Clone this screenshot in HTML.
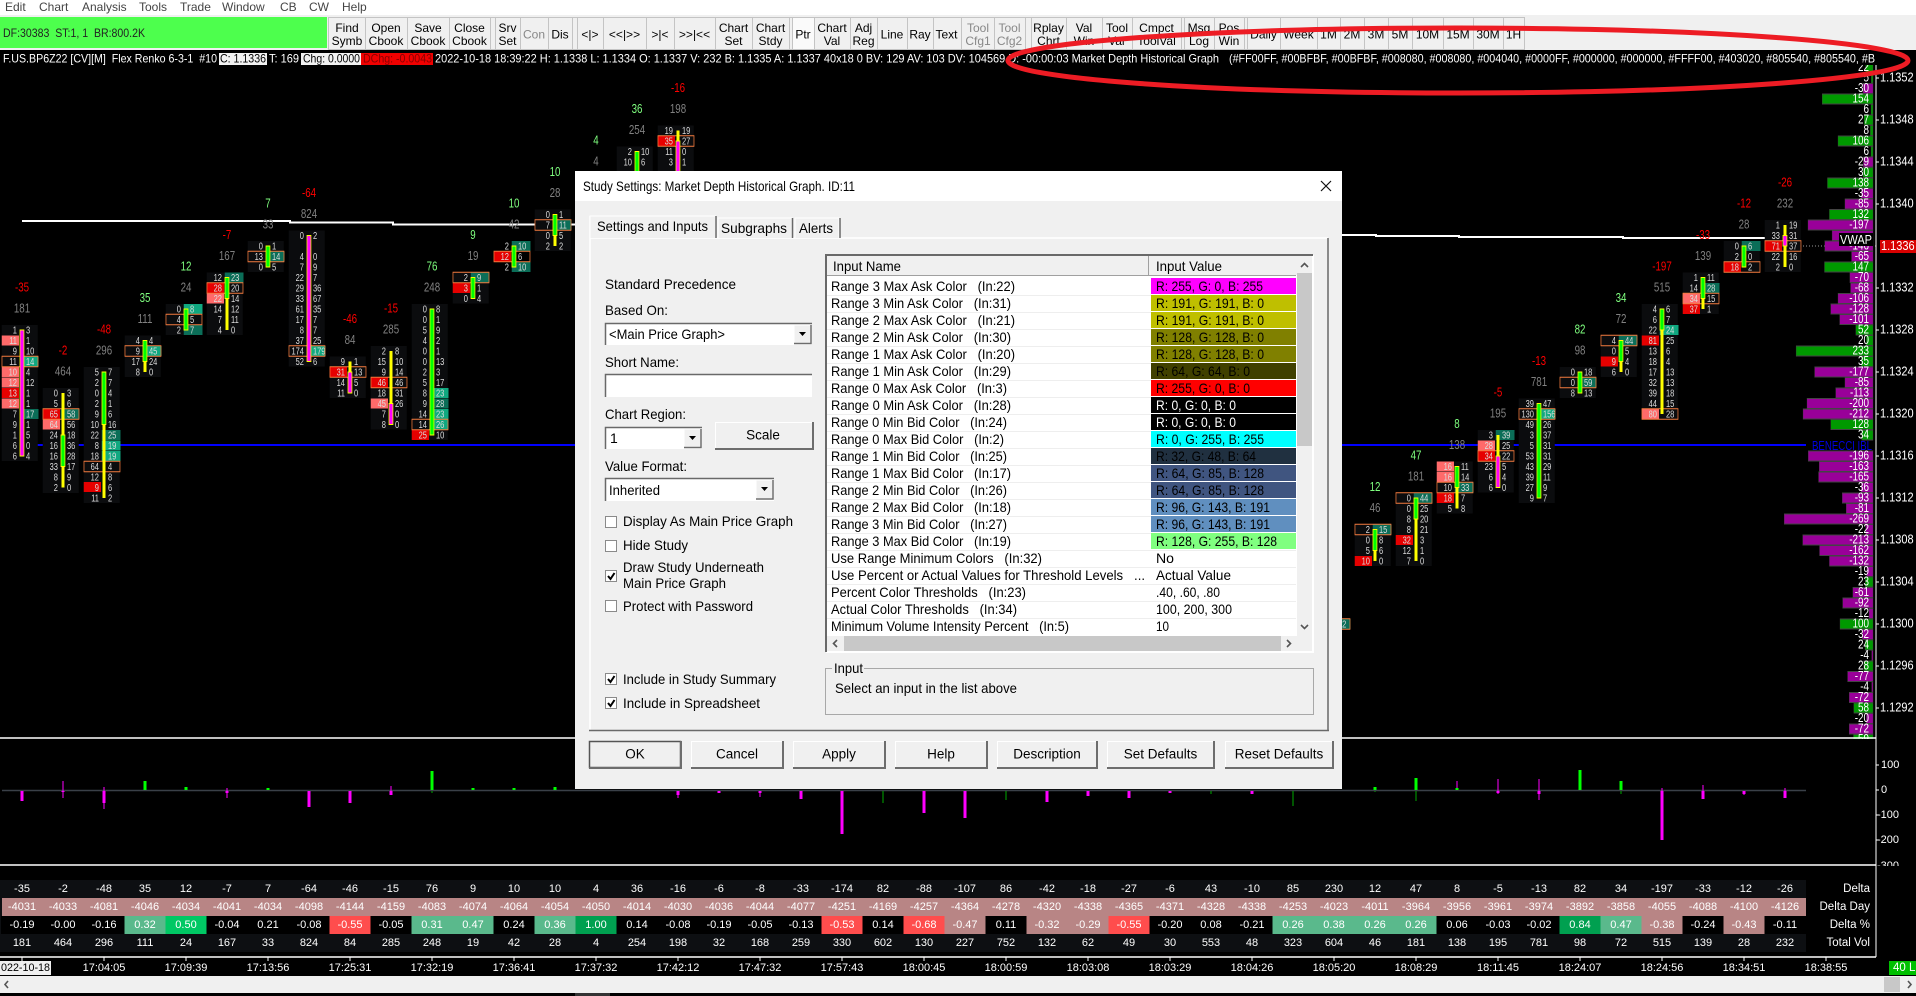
<!DOCTYPE html>
<html><head><meta charset="utf-8"><title>Study Settings</title>
<style>
html,body{margin:0;background:#000;overflow:hidden}
svg{display:block}
text{font-family:"Liberation Sans",sans-serif;dominant-baseline:central;font-size:12px}
.f text{font-size:10px;fill:#ddd}
.l{text-anchor:end;transform:translateX(-6.7px)}
.r{transform:translateX(5.3px)}
.bg{x:-27px;width:48px;fill:#0b0c0e}
.L{x:-27px;width:23px;height:10px}
.H{x:-3px;width:25px;height:10px}
.p{fill:#ff6a6a}.e{fill:#e60000}.t{fill:#10a880}.d{fill:#0b6e58}
.x{x:-26.7px;width:48px;height:10.5px;fill:none;stroke:#f47b3e}
.W{x:-2px;width:4px;fill:#ff0}
.G{x:-2.7px;width:5.3px;fill:#0f0;stroke:#ff0}
.M{x:-2.7px;width:5.3px;fill:#f0f;stroke:#ff0}
.f text.u{font-size:13px;text-anchor:middle;fill:#7fff7f}
.f text.n{font-size:13px;text-anchor:middle;fill:#f00}
.f text.v{font-size:13px;text-anchor:middle;fill:#808080}
.vp rect{height:10px;stroke:#444}
.vg{fill:#090}.vm{fill:#909}
.vt text{font-size:13px;fill:#fff;text-anchor:end}
.px text{font-size:12.5px;fill:#fff}
.tb text{font-size:11px;fill:#fff;text-anchor:middle}
.tk text{font-size:12px;text-anchor:middle;fill:#000}
.tk text.o{fill:#888}
.dg text{font-size:14px;fill:#000}
.c{text-anchor:middle}
.face{fill:#f0f0f0;stroke:#fff}
.sh{fill:none;stroke:#6d6d6d;stroke-width:2}
.cb{fill:#fff;stroke:#8a8a8a}
.ck{fill:none;stroke:#000;stroke-width:2}
.cv{fill:none;stroke:#555;stroke-width:1.6}
</style></head><body>
<svg width="1916" height="996" viewBox="0 0 1916 996" xmlns="http://www.w3.org/2000/svg">
<rect width="1916" height="996" fill="#000"/>

<!-- VWAP + level lines -->
<path d="M22 221H290V222.5H393V224.5H575" stroke="#fff" stroke-width="2" fill="none"/>
<path d="M1340 235H1376V236H1459V237H1623V238H1785" stroke="#fff" stroke-width="2" fill="none"/>
<path d="M2 445H1806" stroke="#00f" stroke-width="2"/>
<path d="M1785 246H1878" stroke="#999" stroke-dasharray="1 2"/>

<!-- footprint columns -->
<g class="f" transform="translate(22 0) scale(.75 1)"><rect class="bg" y="325" height="136"/><rect class="L p" y="335.5"/><rect class="L p" y="367"/><rect class="L p" y="377.5"/><rect class="L e" y="388"/><rect class="L p" y="398.5"/><rect class="H t" y="356.5"/><rect class="H d" y="409"/>
<g class="l"><text y="330">1</text><text y="340.5">11</text><text y="351">9</text><text y="361.5">11</text><text y="372">10</text><text y="382.5">12</text><text y="393">13</text><text y="403.5">12</text><text y="414">7</text><text y="424.5">9</text><text y="435">1</text><text y="445.5">6</text><text y="456">6</text></g>
<g class="r"><text y="330">3</text><text y="340.5">1</text><text y="351">10</text><text y="361.5">14</text><text y="372">4</text><text y="382.5">12</text><text y="393">1</text><text y="403.5">1</text><text y="414">17</text><text y="424.5">1</text><text y="435">5</text><text y="445.5">0</text><text y="456">4</text></g>
<rect class="x" y="356.25"/><rect class="M" y="330" height="126"/><text class="n" y="288">-35</text><text class="v" y="309">181</text></g>

<g class="f" transform="translate(63 0) scale(.75 1)"><rect class="bg" y="388" height="105"/><rect class="L e" y="409"/><rect class="L p" y="419.5"/><rect class="H d" y="409"/>
<g class="l"><text y="393">0</text><text y="403.5">5</text><text y="414">65</text><text y="424.5">64</text><text y="435">24</text><text y="445.5">16</text><text y="456">16</text><text y="466.5">33</text><text y="477">8</text><text y="487.5">2</text></g>
<g class="r"><text y="393">3</text><text y="403.5">6</text><text y="414">58</text><text y="424.5">56</text><text y="435">18</text><text y="445.5">36</text><text y="456">28</text><text y="466.5">17</text><text y="477">9</text><text y="487.5">0</text></g>
<rect class="x" y="408.75"/><rect class="W" y="393" height="94.5"/><rect class="G" y="435" height="31.5"/><text class="n" y="351">-2</text><text class="v" y="372">464</text></g>

<g class="f" transform="translate(104 0) scale(.75 1)"><rect class="bg" y="367" height="136"/><rect class="L e" y="482"/><rect class="H d" y="430"/><rect class="H t" y="440.5"/><rect class="H t" y="451"/>
<g class="l"><text y="372">5</text><text y="382.5">2</text><text y="393">0</text><text y="403.5">2</text><text y="414">9</text><text y="424.5">10</text><text y="435">22</text><text y="445.5">8</text><text y="456">18</text><text y="466.5">64</text><text y="477">12</text><text y="487.5">9</text><text y="498">11</text></g>
<g class="r"><text y="372">7</text><text y="382.5">7</text><text y="393">4</text><text y="403.5">1</text><text y="414">6</text><text y="424.5">16</text><text y="435">25</text><text y="445.5">19</text><text y="456">19</text><text y="466.5">4</text><text y="477">8</text><text y="487.5">6</text><text y="498">2</text></g>
<rect class="x" y="461.25"/><rect class="W" y="372" height="126"/><rect class="G" y="372" height="52.5"/><text class="n" y="330">-48</text><text class="v" y="351">296</text></g>

<g class="f" transform="translate(145 0) scale(.75 1)"><rect class="bg" y="335.5" height="41.5"/><rect class="H t" y="346"/>
<g class="l"><text y="340.5">4</text><text y="351">9</text><text y="361.5">17</text><text y="372">8</text></g>
<g class="r"><text y="340.5">4</text><text y="351">45</text><text y="361.5">24</text><text y="372">0</text></g>
<rect class="x" y="345.75"/><rect class="W" y="340.5" height="31.5"/><rect class="G" y="340.5" height="21"/><text class="u" y="298.5">35</text><text class="v" y="319.5">111</text></g>

<g class="f" transform="translate(186 0) scale(.75 1)"><rect class="bg" y="304" height="31"/><rect class="H t" y="304"/><rect class="H d" y="325"/>
<g class="l"><text y="309">0</text><text y="319.5">4</text><text y="330">2</text></g>
<g class="r"><text y="309">8</text><text y="319.5">5</text><text y="330">7</text></g>
<rect class="x" y="314.25"/><rect class="G" y="309" height="21"/><text class="u" y="267">12</text><text class="v" y="288">24</text></g>

<g class="f" transform="translate(227 0) scale(.75 1)"><rect class="bg" y="272.5" height="62.5"/><rect class="L e" y="283"/><rect class="L p" y="293.5"/><rect class="H d" y="272.5"/>
<g class="l"><text y="277.5">12</text><text y="288">28</text><text y="298.5">22</text><text y="309">14</text><text y="319.5">7</text><text y="330">4</text></g>
<g class="r"><text y="277.5">23</text><text y="288">20</text><text y="298.5">14</text><text y="309">12</text><text y="319.5">11</text><text y="330">0</text></g>
<rect class="x" y="282.75"/><rect class="W" y="277.5" height="52.5"/><rect class="G" y="277.5" height="21"/><text class="n" y="235.5">-7</text><text class="v" y="256.5">167</text></g>

<g class="f" transform="translate(268 0) scale(.75 1)"><rect class="bg" y="241" height="31"/><rect class="H d" y="251.5"/>
<g class="l"><text y="246">0</text><text y="256.5">13</text><text y="267">0</text></g>
<g class="r"><text y="246">1</text><text y="256.5">14</text><text y="267">5</text></g>
<rect class="x" y="251.25"/><rect class="G" y="246" height="21"/><text class="u" y="204">7</text><text class="v" y="225">33</text></g>

<g class="f" transform="translate(309 0) scale(.75 1)"><rect class="bg" y="230.5" height="136"/><rect class="H t" y="346"/>
<g class="l"><text y="235.5">0</text><text y="256.5">4</text><text y="267">7</text><text y="277.5">22</text><text y="288">29</text><text y="298.5">33</text><text y="309">61</text><text y="319.5">17</text><text y="330">8</text><text y="340.5">37</text><text y="351">174</text><text y="361.5">52</text></g>
<g class="r"><text y="235.5">2</text><text y="256.5">0</text><text y="267">9</text><text y="277.5">7</text><text y="288">36</text><text y="298.5">67</text><text y="309">35</text><text y="319.5">7</text><text y="330">7</text><text y="340.5">25</text><text y="351">179</text><text y="361.5">6</text></g>
<rect class="x" y="345.75"/><rect class="M" y="235.5" height="126"/><text class="n" y="193.5">-64</text><text class="v" y="214.5">824</text></g>

<g class="f" transform="translate(350 0) scale(.75 1)"><rect class="bg" y="356.5" height="41.5"/><rect class="L e" y="367"/>
<g class="l"><text y="361.5">9</text><text y="372">31</text><text y="382.5">14</text><text y="393">11</text></g>
<g class="r"><text y="361.5">1</text><text y="372">13</text><text y="382.5">5</text><text y="393">0</text></g>
<rect class="x" y="366.75"/><rect class="W" y="361.5" height="31.5"/><rect class="M" y="372" height="21"/><text class="n" y="319.5">-46</text><text class="v" y="340.5">84</text></g>

<g class="f" transform="translate(391 0) scale(.75 1)"><rect class="bg" y="346" height="83.5"/><rect class="L e" y="377.5"/><rect class="L p" y="398.5"/>
<g class="l"><text y="351">2</text><text y="361.5">15</text><text y="372">9</text><text y="382.5">46</text><text y="393">18</text><text y="403.5">45</text><text y="414">7</text><text y="424.5">8</text></g>
<g class="r"><text y="351">8</text><text y="361.5">10</text><text y="372">14</text><text y="382.5">46</text><text y="393">31</text><text y="403.5">26</text><text y="414">0</text><text y="424.5">0</text></g>
<rect class="x" y="377.25"/><rect class="W" y="351" height="73.5"/><rect class="M" y="403.5" height="21"/><text class="n" y="309">-15</text><text class="v" y="330">285</text></g>

<g class="f" transform="translate(432 0) scale(.75 1)"><rect class="bg" y="304" height="136"/><rect class="L e" y="430"/><rect class="H t" y="388"/><rect class="H d" y="398.5"/><rect class="H t" y="409"/><rect class="H t" y="419.5"/>
<g class="l"><text y="309">0</text><text y="319.5">0</text><text y="330">5</text><text y="340.5">4</text><text y="351">0</text><text y="361.5">0</text><text y="372">2</text><text y="382.5">5</text><text y="393">8</text><text y="403.5">9</text><text y="414">14</text><text y="424.5">14</text><text y="435">25</text></g>
<g class="r"><text y="309">8</text><text y="319.5">1</text><text y="330">9</text><text y="340.5">2</text><text y="351">1</text><text y="361.5">13</text><text y="372">3</text><text y="382.5">17</text><text y="393">23</text><text y="403.5">28</text><text y="414">23</text><text y="424.5">26</text><text y="435">10</text></g>
<rect class="x" y="419.25"/><rect class="G" y="309" height="126"/><text class="u" y="267">76</text><text class="v" y="288">248</text></g>

<g class="f" transform="translate(473 0) scale(.75 1)"><rect class="bg" y="272.5" height="31"/><rect class="L e" y="283"/><rect class="H d" y="272.5"/>
<g class="l"><text y="277.5">2</text><text y="288">3</text><text y="298.5">0</text></g>
<g class="r"><text y="277.5">9</text><text y="288">1</text><text y="298.5">4</text></g>
<rect class="x" y="272.25"/><rect class="G" y="277.5" height="21"/><text class="u" y="235.5">9</text><text class="v" y="256.5">19</text></g>

<g class="f" transform="translate(514 0) scale(.75 1)"><rect class="L e" y="251.5"/><rect class="H d" y="241"/><rect class="H d" y="262"/>
<g class="l"><text y="246">2</text><text y="256.5">12</text><text y="267">2</text></g>
<g class="r"><text y="246">10</text><text y="256.5">6</text><text y="267">10</text></g>
<rect class="x" y="251.25"/><rect class="G" y="246" height="21"/><text class="u" y="204">10</text><text class="v" y="225">42</text></g>

<g class="f" transform="translate(555 0) scale(.75 1)"><rect class="bg" y="209.5" height="41.5"/><rect class="H d" y="220"/>
<g class="l"><text y="214.5">0</text><text y="225">7</text><text y="235.5">0</text><text y="246">2</text></g>
<g class="r"><text y="214.5">1</text><text y="225">11</text><text y="235.5">5</text><text y="246">2</text></g>
<rect class="x" y="219.75"/><rect class="W" y="214.5" height="31.5"/><rect class="G" y="214.5" height="21"/><text class="u" y="172.5">10</text><text class="v" y="193.5">28</text></g>

<g class="f" transform="translate(596 0) scale(.75 1)"><text class="u" y="141">4</text><text class="v" y="162">4</text></g>

<g class="f" transform="translate(637 0) scale(.75 1)"><rect class="bg" y="146.5" height="26"/>
<g class="l"><text y="151.5">2</text><text y="162">10</text></g><g class="r"><text y="151.5">10</text><text y="162">6</text></g>
<rect class="G" y="151.5" height="21"/><text class="u" y="109.5">36</text><text class="v" y="130.5">254</text></g>

<g class="f" transform="translate(678 0) scale(.75 1)"><rect class="bg" y="125.5" height="47"/><rect class="L e" y="136"/>
<g class="l"><text y="130.5">19</text><text y="141">35</text><text y="151.5">11</text><text y="162">3</text></g><g class="r"><text y="130.5">19</text><text y="141">27</text><text y="151.5">0</text><text y="162">1</text></g>
<rect class="x" y="135.75"/><rect class="W" y="130.5" height="15"/><rect class="M" y="141" height="31"/><text class="n" y="88.5">-16</text><text class="v" y="109.5">198</text></g>

<g class="f" transform="translate(1334 0) scale(.75 1)"><rect class="H d" y="619"/>
<g class="r"><text y="571.5">4</text><text y="582">1</text><text y="592.5">6</text><text y="603">0</text><text y="613.5">9</text><text y="624">52</text><text y="634.5">3</text><text y="645">7</text></g>
<rect class="x" y="618.75"/></g>

<g class="f" transform="translate(1375 0) scale(.75 1)"><rect class="bg" y="524.5" height="41.5"/><rect class="L e" y="556"/><rect class="H d" y="524.5"/>
<g class="l"><text y="529.5">2</text><text y="540">0</text><text y="550.5">5</text><text y="561">10</text></g>
<g class="r"><text y="529.5">15</text><text y="540">8</text><text y="550.5">6</text><text y="561">0</text></g>
<rect class="x" y="524.25"/><rect class="W" y="529.5" height="31.5"/><rect class="G" y="529.5" height="21"/><text class="u" y="487.5">12</text><text class="v" y="508.5">46</text></g>

<g class="f" transform="translate(1416 0) scale(.75 1)"><rect class="bg" y="493" height="73"/><rect class="L e" y="535"/><rect class="H d" y="493"/>
<g class="l"><text y="498">0</text><text y="508.5">0</text><text y="519">8</text><text y="529.5">8</text><text y="540">32</text><text y="550.5">12</text><text y="561">7</text></g>
<g class="r"><text y="498">44</text><text y="508.5">25</text><text y="519">20</text><text y="529.5">21</text><text y="540">3</text><text y="550.5">1</text><text y="561">0</text></g>
<rect class="x" y="492.75"/><rect class="W" y="498" height="63"/><rect class="G" y="498" height="21"/><text class="u" y="456">47</text><text class="v" y="477">181</text></g>

<g class="f" transform="translate(1457 0) scale(.75 1)"><rect class="bg" y="461.5" height="52"/><rect class="L p" y="461.5"/><rect class="L p" y="472"/><rect class="L e" y="493"/><rect class="H d" y="482.5"/>
<g class="l"><text y="466.5">16</text><text y="477">16</text><text y="487.5">10</text><text y="498">18</text><text y="508.5">5</text></g>
<g class="r"><text y="466.5">11</text><text y="477">14</text><text y="487.5">33</text><text y="498">7</text><text y="508.5">8</text></g>
<rect class="x" y="482.25"/><rect class="W" y="466.5" height="42"/><rect class="G" y="466.5" height="21"/><text class="u" y="424.5">8</text><text class="v" y="445.5">138</text></g>

<g class="f" transform="translate(1498 0) scale(.75 1)"><rect class="bg" y="430" height="62.5"/><rect class="L p" y="440.5"/><rect class="L e" y="451"/><rect class="H d" y="430"/>
<g class="l"><text y="435">3</text><text y="445.5">28</text><text y="456">34</text><text y="466.5">23</text><text y="477">6</text><text y="487.5">6</text></g>
<g class="r"><text y="435">39</text><text y="445.5">25</text><text y="456">22</text><text y="466.5">5</text><text y="477">4</text><text y="487.5">0</text></g>
<rect class="x" y="450.75"/><rect class="W" y="435" height="21"/><rect class="M" y="456" height="31.5"/><text class="n" y="393">-5</text><text class="v" y="414">195</text></g>

<g class="f" transform="translate(1539 0) scale(.75 1)"><rect class="bg" y="398.5" height="104.5"/><rect class="H t" y="409"/>
<g class="l"><text y="403.5">39</text><text y="414">130</text><text y="424.5">49</text><text y="435">3</text><text y="445.5">5</text><text y="456">53</text><text y="466.5">43</text><text y="477">39</text><text y="487.5">27</text><text y="498">9</text></g>
<g class="r"><text y="403.5">47</text><text y="414">156</text><text y="424.5">26</text><text y="435">37</text><text y="445.5">31</text><text y="456">31</text><text y="466.5">29</text><text y="477">11</text><text y="487.5">9</text><text y="498">7</text></g>
<rect class="x" y="408.75"/><rect class="G" y="403.5" height="94.5"/><text class="n" y="361.5">-13</text><text class="v" y="382.5">781</text></g>

<g class="f" transform="translate(1580 0) scale(.75 1)"><rect class="bg" y="367" height="31"/><rect class="H d" y="377.5"/>
<g class="l"><text y="372">0</text><text y="382.5">0</text><text y="393">8</text></g>
<g class="r"><text y="372">18</text><text y="382.5">59</text><text y="393">13</text></g>
<rect class="x" y="377.25"/><rect class="G" y="372" height="21"/><text class="u" y="330">82</text><text class="v" y="351">98</text></g>

<g class="f" transform="translate(1621 0) scale(.75 1)"><rect class="bg" y="335.5" height="41.5"/><rect class="L e" y="356.5"/><rect class="H d" y="335.5"/>
<g class="l"><text y="340.5">4</text><text y="351">0</text><text y="361.5">9</text><text y="372">6</text></g>
<g class="r"><text y="340.5">44</text><text y="351">5</text><text y="361.5">4</text><text y="372">0</text></g>
<rect class="x" y="335.25"/><rect class="W" y="340.5" height="31.5"/><rect class="G" y="340.5" height="21"/><text class="u" y="298.5">34</text><text class="v" y="319.5">72</text></g>

<g class="f" transform="translate(1662 0) scale(.75 1)"><rect class="bg" y="304" height="115"/><rect class="L e" y="335.5"/><rect class="L p" y="409"/><rect class="H t" y="325"/>
<g class="l"><text y="309">4</text><text y="319.5">6</text><text y="330">22</text><text y="340.5">81</text><text y="351">13</text><text y="361.5">18</text><text y="372">17</text><text y="382.5">32</text><text y="393">39</text><text y="403.5">44</text><text y="414">80</text></g>
<g class="r"><text y="309">6</text><text y="319.5">7</text><text y="330">24</text><text y="340.5">25</text><text y="351">6</text><text y="361.5">4</text><text y="372">13</text><text y="382.5">13</text><text y="393">18</text><text y="403.5">15</text><text y="414">28</text></g>
<rect class="x" y="408.75"/><rect class="W" y="309" height="105"/><rect class="G" y="309" height="21"/><text class="n" y="267">-197</text><text class="v" y="288">515</text></g>

<g class="f" transform="translate(1703 0) scale(.75 1)"><rect class="bg" y="272.5" height="41.5"/><rect class="L p" y="293.5"/><rect class="L e" y="304"/><rect class="H d" y="283"/>
<g class="l"><text y="277.5">1</text><text y="288">14</text><text y="298.5">34</text><text y="309">37</text></g>
<g class="r"><text y="277.5">11</text><text y="288">28</text><text y="298.5">15</text><text y="309">1</text></g>
<rect class="x" y="293.25"/><rect class="W" y="277.5" height="31.5"/><rect class="G" y="277.5" height="21"/><text class="n" y="235.5">-33</text><text class="v" y="256.5">139</text></g>

<g class="f" transform="translate(1744 0) scale(.75 1)"><rect class="bg" y="241" height="31"/><rect class="L e" y="262"/><rect class="H d" y="241"/>
<g class="l"><text y="246">0</text><text y="256.5">2</text><text y="267">18</text></g>
<g class="r"><text y="246">6</text><text y="256.5">0</text><text y="267">2</text></g>
<rect class="x" y="261.75"/><rect class="G" y="246" height="21"/><text class="n" y="204">-12</text><text class="v" y="225">28</text></g>

<g class="f" transform="translate(1785 0) scale(.75 1)"><rect class="bg" y="220" height="52"/><rect class="L e" y="241"/>
<g class="l"><text y="225">1</text><text y="235.5">33</text><text y="246">71</text><text y="256.5">22</text><text y="267">2</text></g>
<g class="r"><text y="225">19</text><text y="235.5">31</text><text y="246">37</text><text y="256.5">16</text><text y="267">0</text></g>
<rect class="x" y="240.75"/><rect class="W" y="225" height="42"/><rect class="M" y="235.5" height="10.5"/><text class="n" y="183">-26</text><text class="v" y="204">232</text></g>

<!-- volume profile bars -->
<g class="vp" transform="translate(1873 0) scale(-.33 1)">
<rect class="vg" y="62.5" width="22"/><rect class="vg" y="73" width="5"/><rect class="vm" y="83.5" width="30"/><rect class="vg" y="94" width="154"/><rect class="vg" y="104.5" width="6"/><rect class="vg" y="115" width="27"/><rect class="vg" y="125.5" width="8"/><rect class="vg" y="136" width="106"/><rect class="vg" y="146.5" width="6"/><rect class="vm" y="157" width="29"/><rect class="vg" y="167.5" width="30"/><rect class="vg" y="178" width="138"/><rect class="vm" y="188.5" width="35"/><rect class="vm" y="199" width="85"/><rect class="vg" y="209.5" width="132"/><rect class="vm" y="220" width="197"/><rect class="vm" y="230.5" width="124"/><rect class="vm" y="241" width="146"/><rect class="vm" y="251.5" width="65"/><rect class="vg" y="262" width="147"/><rect class="vm" y="272.5" width="70"/><rect class="vm" y="283" width="68"/><rect class="vm" y="293.5" width="106"/><rect class="vm" y="304" width="128"/><rect class="vm" y="314.5" width="101"/><rect class="vg" y="325" width="52"/><rect class="vg" y="335.5" width="20"/><rect class="vg" y="346" width="233"/><rect class="vg" y="356.5" width="35"/><rect class="vm" y="367" width="177"/><rect class="vm" y="377.5" width="85"/><rect class="vm" y="388" width="113"/><rect class="vm" y="398.5" width="200"/><rect class="vm" y="409" width="212"/><rect class="vg" y="419.5" width="128"/><rect class="vg" y="430" width="34"/><rect class="vm" y="451" width="196"/><rect class="vm" y="461.5" width="163"/><rect class="vm" y="472" width="165"/><rect class="vm" y="482.5" width="36"/><rect class="vm" y="493" width="93"/><rect class="vm" y="503.5" width="81"/><rect class="vm" y="514" width="269"/><rect class="vm" y="524.5" width="22"/><rect class="vm" y="535" width="213"/><rect class="vm" y="545.5" width="162"/><rect class="vm" y="556" width="132"/><rect class="vm" y="566.5" width="19"/><rect class="vg" y="577" width="23"/><rect class="vm" y="587.5" width="61"/><rect class="vm" y="598" width="92"/><rect class="vm" y="608.5" width="12"/><rect class="vg" y="619" width="100"/><rect class="vm" y="629.5" width="32"/><rect class="vg" y="640" width="24"/><rect class="vm" y="650.5" width="4"/><rect class="vg" y="661" width="28"/><rect class="vm" y="671.5" width="77"/><rect class="vm" y="682" width="4"/><rect class="vm" y="692.5" width="72"/><rect class="vg" y="703" width="58"/><rect class="vm" y="713.5" width="20"/><rect class="vm" y="724" width="72"/><rect class="vg" y="734.5" width="59"/>
</g>
<g class="vt" transform="translate(1869 0) scale(.76 1)">
<text y="67.5">22</text><text y="78">5</text><text y="88.5">-30</text><text y="99">154</text><text y="109.5">6</text><text y="120">27</text><text y="130.5">8</text><text y="141">106</text><text y="151.5">6</text><text y="162">-29</text><text y="172.5">30</text><text y="183">138</text><text y="193.5">-35</text><text y="204">-85</text><text y="214.5">132</text><text y="225">-197</text><text y="256.5">-65</text><text y="267">147</text><text y="277.5">-70</text><text y="288">-68</text><text y="298.5">-106</text><text y="309">-128</text><text y="319.5">-101</text><text y="330">52</text><text y="340.5">20</text><text y="351">233</text><text y="361.5">35</text><text y="372">-177</text><text y="382.5">-85</text><text y="393">-113</text><text y="403.5">-200</text><text y="414">-212</text><text y="424.5">128</text><text y="435">34</text><text y="456">-196</text><text y="466.5">-163</text><text y="477">-165</text><text y="487.5">-36</text><text y="498">-93</text><text y="508.5">-81</text><text y="519">-269</text><text y="529.5">-22</text><text y="540">-213</text><text y="550.5">-162</text><text y="561">-132</text><text y="571.5">-19</text><text y="582">23</text><text y="592.5">-61</text><text y="603">-92</text><text y="613.5">-12</text><text y="624">100</text><text y="634.5">-32</text><text y="645">24</text><text y="655.5">-4</text><text y="666">28</text><text y="676.5">-77</text><text y="687">-4</text><text y="697.5">-72</text><text y="708">58</text><text y="718.5">-20</text><text y="729">-72</text><text y="739.5">59</text>
<text y="246" fill="#ddd">-146</text>
</g>
<rect x="1839" y="233" width="34" height="13" fill="#000"/>
<text x="1840" y="239.5" font-size="13" fill="#fff" textLength="32" lengthAdjust="spacingAndGlyphs" style="font-size:13px">VWAP</text>
<text x="1812" y="445.5" fill="#0000e0" textLength="60" lengthAdjust="spacingAndGlyphs" style="font-size:13px">BENECCI IBL</text>

<!-- lower panel -->
<rect x="0" y="739" width="1876" height="240" fill="#000"/>
<path d="M0 738H1876M0 865H1876M0 957H1876" stroke="#fff" stroke-width="1.5"/>
<path d="M1876 65V957" stroke="#fff"/>
<path d="M2 790.5H1806" stroke="#3a4048" stroke-width="1.5"/>
<path fill="none" stroke="#f0f" stroke-width="3" d="M22 791v10M63 791v1M104 791v12M227 791v2M309 791v16M350 791v12M391 791v4M678 791v4M719 791v2M760 791v2M801 791v8M842 791v43M924 791v22M965 791v27M1047 791v11M1088 791v5M1129 791v7M1170 791v2M1252 791v3M1498 791v2M1539 791v3M1662 791v49M1703 791v8M1744 791v3M1785 791v7"/>
<path fill="none" stroke="#f0f" d="M63 781v17M104 787v22M227 788v10M391 786v5M678 791v7M760 791v6M1457 781v9M1498 779v15M1539 779v21M1662 788v3M1703 785v6M1744 791v4M1785 788v3"/>
<path fill="none" stroke="#0f0" stroke-width="3" d="M145 790v-9M186 790v-3M268 790v-2M432 790v-19M473 790v-2M514 790v-2M555 790v-3M1375 790v-3M1416 790v-12M1457 790v-2M1580 790v-20M1621 790v-9"/>
<path fill="none" stroke="#0a0" d="M432 791v2M883 791v12M1006 791v9M1211 791v3M1293 791v15M1375 791v1M1416 791v10M1621 791v3"/>

<!-- table -->
<rect x="0" y="880" width="1806" height="72" fill="#0d0f12"/>
<rect x="2" y="898" width="1804" height="18" fill="#b88585"/>
<rect x="1" y="916" width="1805" height="18" fill="#000"/>
<path fill="#5ab98c" d="M124.500 916h41v18h-41zM411.500 916h82v18h-82zM534.500 916h41v18h-41zM1272.500 916h164v18h-164zM1600.500 916h41v18h-41z"/>
<path fill="#00c864" d="M165.500 916h41v18h-41z"/>
<path fill="#00a050" d="M575.500 916h41v18h-41zM1559.500 916h41v18h-41z"/>
<path fill="#ff4d4d" d="M329.500 916h41v18h-41zM821.500 916h41v18h-41zM903.500 916h41v18h-41zM1108.500 916h41v18h-41z"/>
<path fill="#b88585" d="M944.500 916h41v18h-41zM1026.500 916h82v18h-82zM1641.500 916h41v18h-41zM1723.500 916h41v18h-41z"/>
<g class="tb" transform="translate(0 889)"><text x="22">-35</text><text x="63">-2</text><text x="104">-48</text><text x="145">35</text><text x="186">12</text><text x="227">-7</text><text x="268">7</text><text x="309">-64</text><text x="350">-46</text><text x="391">-15</text><text x="432">76</text><text x="473">9</text><text x="514">10</text><text x="555">10</text><text x="596">4</text><text x="637">36</text><text x="678">-16</text><text x="719">-6</text><text x="760">-8</text><text x="801">-33</text><text x="842">-174</text><text x="883">82</text><text x="924">-88</text><text x="965">-107</text><text x="1006">86</text><text x="1047">-42</text><text x="1088">-18</text><text x="1129">-27</text><text x="1170">-6</text><text x="1211">43</text><text x="1252">-10</text><text x="1293">85</text><text x="1334">230</text><text x="1375">12</text><text x="1416">47</text><text x="1457">8</text><text x="1498">-5</text><text x="1539">-13</text><text x="1580">82</text><text x="1621">34</text><text x="1662">-197</text><text x="1703">-33</text><text x="1744">-12</text><text x="1785">-26</text></g>
<g class="tb" transform="translate(0 907)"><text x="22">-4031</text><text x="63">-4033</text><text x="104">-4081</text><text x="145">-4046</text><text x="186">-4034</text><text x="227">-4041</text><text x="268">-4034</text><text x="309">-4098</text><text x="350">-4144</text><text x="391">-4159</text><text x="432">-4083</text><text x="473">-4074</text><text x="514">-4064</text><text x="555">-4054</text><text x="596">-4050</text><text x="637">-4014</text><text x="678">-4030</text><text x="719">-4036</text><text x="760">-4044</text><text x="801">-4077</text><text x="842">-4251</text><text x="883">-4169</text><text x="924">-4257</text><text x="965">-4364</text><text x="1006">-4278</text><text x="1047">-4320</text><text x="1088">-4338</text><text x="1129">-4365</text><text x="1170">-4371</text><text x="1211">-4328</text><text x="1252">-4338</text><text x="1293">-4253</text><text x="1334">-4023</text><text x="1375">-4011</text><text x="1416">-3964</text><text x="1457">-3956</text><text x="1498">-3961</text><text x="1539">-3974</text><text x="1580">-3892</text><text x="1621">-3858</text><text x="1662">-4055</text><text x="1703">-4088</text><text x="1744">-4100</text><text x="1785">-4126</text></g>
<g class="tb" transform="translate(0 925)"><text x="22">-0.19</text><text x="63">-0.00</text><text x="104">-0.16</text><text x="145">0.32</text><text x="186">0.50</text><text x="227">-0.04</text><text x="268">0.21</text><text x="309">-0.08</text><text x="350">-0.55</text><text x="391">-0.05</text><text x="432">0.31</text><text x="473">0.47</text><text x="514">0.24</text><text x="555">0.36</text><text x="596">1.00</text><text x="637">0.14</text><text x="678">-0.08</text><text x="719">-0.19</text><text x="760">-0.05</text><text x="801">-0.13</text><text x="842">-0.53</text><text x="883">0.14</text><text x="924">-0.68</text><text x="965">-0.47</text><text x="1006">0.11</text><text x="1047">-0.32</text><text x="1088">-0.29</text><text x="1129">-0.55</text><text x="1170">-0.20</text><text x="1211">0.08</text><text x="1252">-0.21</text><text x="1293">0.26</text><text x="1334">0.38</text><text x="1375">0.26</text><text x="1416">0.26</text><text x="1457">0.06</text><text x="1498">-0.03</text><text x="1539">-0.02</text><text x="1580">0.84</text><text x="1621">0.47</text><text x="1662">-0.38</text><text x="1703">-0.24</text><text x="1744">-0.43</text><text x="1785">-0.11</text></g>
<g class="tb" transform="translate(0 943)"><text x="22">181</text><text x="63">464</text><text x="104">296</text><text x="145">111</text><text x="186">24</text><text x="227">167</text><text x="268">33</text><text x="309">824</text><text x="350">84</text><text x="391">285</text><text x="432">248</text><text x="473">19</text><text x="514">42</text><text x="555">28</text><text x="596">4</text><text x="637">254</text><text x="678">198</text><text x="719">32</text><text x="760">168</text><text x="801">259</text><text x="842">330</text><text x="883">602</text><text x="924">130</text><text x="965">227</text><text x="1006">752</text><text x="1047">132</text><text x="1088">62</text><text x="1129">49</text><text x="1170">30</text><text x="1211">553</text><text x="1252">48</text><text x="1293">323</text><text x="1334">604</text><text x="1375">46</text><text x="1416">181</text><text x="1457">138</text><text x="1498">195</text><text x="1539">781</text><text x="1580">98</text><text x="1621">72</text><text x="1662">515</text><text x="1703">139</text><text x="1744">28</text><text x="1785">232</text></g>
<g fill="#fff" style="text-anchor:end;font-size:11px"><text x="1870" y="889" style="text-anchor:end;font-size:11.5px;fill:#fff">Delta</text><text x="1870" y="907" style="text-anchor:end;font-size:11.5px;fill:#fff">Delta Day</text><text x="1870" y="925" style="text-anchor:end;font-size:11.5px;fill:#fff">Delta %</text><text x="1870" y="943" style="text-anchor:end;font-size:11.5px;fill:#fff">Total Vol</text></g>

<!-- time axis -->
<path stroke="#fff" d="M22 957v4M104 957v4M186 957v4M268 957v4M350 957v4M432 957v4M514 957v4M596 957v4M678 957v4M760 957v4M842 957v4M924 957v4M1006 957v4M1088 957v4M1170 957v4M1252 957v4M1334 957v4M1416 957v4M1498 957v4M1580 957v4M1662 957v4M1744 957v4M1826 957v4"/>
<rect x="0" y="961" width="51" height="14" fill="#f0f0f0"/>
<text x="1" y="968" fill="#000" textLength="49" lengthAdjust="spacingAndGlyphs" style="font-size:11px">022-10-18</text>
<g class="tb" transform="translate(0 968)"><text x="104">17:04:05</text><text x="186">17:09:39</text><text x="268">17:13:56</text><text x="350">17:25:31</text><text x="432">17:32:19</text><text x="514">17:36:41</text><text x="596">17:37:32</text><text x="678">17:42:12</text><text x="760">17:47:32</text><text x="842">17:57:43</text><text x="924">18:00:45</text><text x="1006">18:00:59</text><text x="1088">18:03:08</text><text x="1170">18:03:29</text><text x="1252">18:04:26</text><text x="1334">18:05:20</text><text x="1416">18:08:29</text><text x="1498">18:11:45</text><text x="1580">18:24:07</text><text x="1662">18:24:56</text><text x="1744">18:34:51</text><text x="1826">18:38:55</text></g>
<rect x="1889" y="961" width="27" height="14" fill="#00c000"/>
<text x="1893" y="968" fill="#fff" style="font-size:11.5px">40 L</text>

<!-- right axis -->
<path stroke="#fff" d="M1876 78h3M1876 120h3M1876 162h3M1876 204h3M1876 288h3M1876 330h3M1876 372h3M1876 414h3M1876 456h3M1876 498h3M1876 540h3M1876 582h3M1876 624h3M1876 666h3M1876 708h3M1876 765h3M1876 790h3M1876 815h3M1876 840h3"/>
<g class="px" transform="translate(1880 0) scale(.88 1)"><text y="78">1.1352</text><text y="120">1.1348</text><text y="162">1.1344</text><text y="204">1.1340</text><text y="288">1.1332</text><text y="330">1.1328</text><text y="372">1.1324</text><text y="414">1.1320</text><text y="456">1.1316</text><text y="498">1.1312</text><text y="540">1.1308</text><text y="582">1.1304</text><text y="624">1.1300</text><text y="666">1.1296</text><text y="708">1.1292</text></g>
<rect x="1880" y="240" width="36" height="13" fill="#d80000"/>
<g class="px" transform="translate(1881 0) scale(.88 1)"><text y="246.500">1.1336</text></g>
<g class="tb"><text x="1881" y="765" style="text-anchor:start">100</text><text x="1881" y="790" style="text-anchor:start">0</text><text x="1877" y="815" style="text-anchor:start">-100</text><text x="1877" y="840" style="text-anchor:start">-200</text><text x="1877" y="866" style="text-anchor:start">-300</text></g>
<rect x="1877" y="866" width="39" height="95" fill="#000"/>

<!-- bottom scrollbar -->
<rect x="0" y="976" width="1916" height="17" fill="#f0f0f0"/>
<rect x="1884" y="977" width="16" height="15" fill="#c8c8c8"/>
<path class="cv" d="M8 981l-3 3.500l3 3.500M1908 981l3 3.500l-3 3.500"/>
<rect x="575" y="993" width="35" height="3" fill="#333"/>

<!-- info bar -->
<rect x="0" y="50" width="1916" height="15" fill="#000"/>
<rect x="219" y="53" width="48" height="12" fill="#f2f2f2"/><rect x="301" y="53" width="60" height="12" fill="#f2f2f2"/><rect x="361" y="53" width="72" height="12" fill="#f00000"/>
<g fill="#fff"><text x="3" y="58.500" style="fill:#fff" textLength="214" lengthAdjust="spacingAndGlyphs">F.US.BP6Z22 [CV][M]&nbsp; Flex Renko 6-3-1&nbsp; #10</text>
<text x="220" y="58.500" style="fill:#000" textLength="46" lengthAdjust="spacingAndGlyphs">C: 1.1336</text>
<text x="269" y="58.500" style="fill:#fff" textLength="30" lengthAdjust="spacingAndGlyphs">T: 169</text>
<text x="303" y="58.500" style="fill:#000" textLength="57" lengthAdjust="spacingAndGlyphs">Chg: 0.0000</text>
<text x="363" y="58.500" style="fill:#800" textLength="69" lengthAdjust="spacingAndGlyphs">DChg: -0.0043</text>
<text x="435" y="58.500" style="fill:#fff" textLength="784" lengthAdjust="spacingAndGlyphs">2022-10-18 18:39:22 H: 1.1338 L: 1.1334 O: 1.1337 V: 232 B: 1.1335 A: 1.1337 40x18 0 BV: 129 AV: 103 DV: 104569 D: -00:00:03 Market Depth Historical Graph</text>
<text x="1229" y="58.500" style="fill:#fff" textLength="646" lengthAdjust="spacingAndGlyphs">(#FF00FF, #00BFBF, #00BFBF, #008080, #008080, #004040, #0000FF, #000000, #000000, #FFFF00, #403020, #805540, #805540, #B</text></g>

<!-- menu + toolbar -->
<rect x="0" y="0" width="1916" height="15" fill="#fff"/>
<rect x="0" y="15" width="1916" height="35" fill="#f0f0f0"/>
<g style="fill:#333"><text x="5" y="7" style="fill:#444">Edit</text><text x="39" y="7" style="fill:#444">Chart</text><text x="82" y="7" style="fill:#444">Analysis</text><text x="139" y="7" style="fill:#444">Tools</text><text x="180" y="7" style="fill:#444">Trade</text><text x="222" y="7" style="fill:#444">Window</text><text x="280" y="7" style="fill:#444">CB</text><text x="309" y="7" style="fill:#444">CW</text><text x="342" y="7" style="fill:#444">Help</text></g>
<rect x="0" y="17" width="327" height="31" fill="#4dff4d"/>
<text x="3" y="33" style="fill:#222" textLength="142" lengthAdjust="spacingAndGlyphs">DF:30383&nbsp; ST:1, 1&nbsp; BR:800.2K</text>
<rect x="792" y="17" width="22" height="33" fill="#fafafa"/>
<path fill="none" stroke="#c4c4c4" d="M328.500 17V50M365.500 17V50M407.500 17V50M449.500 17V50M490.500 17V50M495.500 17V50M520.500 17V50M548.500 17V50M572.500 17V50M577.500 17V50M603.500 17V50M646.500 17V50M674.500 17V50M715.500 17V50M752.500 17V50M789.500 17V50M792.500 17V50M814.500 17V50M850.500 17V50M877.500 17V50M907.500 17V50M933.500 17V50M961.500 17V50M994.500 17V50M1025.500 17V50M1031.500 17V50M1066.500 17V50M1102.500 17V50M1132.500 17V50M1181.500 17V50M1184.500 17V50M1214.500 17V50M1244.500 17V50M1247.500 17V50M1280.500 17V50M1317.500 17V50M1340.500 17V50M1364.500 17V50M1388.500 17V50M1412.500 17V50M1443.500 17V50M1473.500 17V50M1503.500 17V50M1524.500 17V50"/>
<path stroke="#c4c4c4" d="M328 17.500H1524M328 49.500H1524"/>
<g class="tk">
<text x="347" y="28">Find</text><text x="347" y="41">Symb</text>
<text x="386" y="28">Open</text><text x="386" y="41">Cbook</text>
<text x="428" y="28">Save</text><text x="428" y="41">Cbook</text>
<text x="469.500" y="28">Close</text><text x="469.500" y="41">Cbook</text>
<text x="507.500" y="28">Srv</text><text x="507.500" y="41">Set</text>
<text class="o" x="534" y="34.500">Con</text><text x="560" y="34.500">Dis</text>
<text x="590" y="34.500">&lt;|&gt;</text><text x="624.500" y="34.500">&lt;&lt;|&gt;&gt;</text><text x="660" y="34.500">&gt;|&lt;</text><text x="694.500" y="34.500">&gt;&gt;|&lt;&lt;</text>
<text x="733.500" y="28">Chart</text><text x="733.500" y="41">Set</text>
<text x="770.500" y="28">Chart</text><text x="770.500" y="41">Stdy</text>
<text x="803" y="34.500">Ptr</text>
<text x="832" y="28">Chart</text><text x="832" y="41">Val</text>
<text x="863.500" y="28">Adj</text><text x="863.500" y="41">Reg</text>
<text x="892" y="34.500">Line</text><text x="920" y="34.500">Ray</text><text x="946.500" y="34.500">Text</text>
<text class="o" x="978" y="28">Tool</text><text class="o" x="978" y="41">Cfg1</text>
<text class="o" x="1009.500" y="28">Tool</text><text class="o" x="1009.500" y="41">Cfg2</text>
<text x="1048.500" y="28">Rplay</text><text x="1048.500" y="41">Chrt</text>
<text x="1084" y="28">Val</text><text x="1084" y="41">Win</text>
<text x="1117" y="28">Tool</text><text x="1117" y="41">Var</text>
<text x="1156.500" y="28">Cmpct</text><text x="1156.500" y="41">ToolVal</text>
<text x="1199" y="28">Msg</text><text x="1199" y="41">Log</text>
<text x="1229" y="28">Pos</text><text x="1229" y="41">Win</text>
<text x="1263.500" y="34.500">Daily</text><text x="1298.500" y="34.500">Week</text><text x="1328.500" y="34.500">1M</text><text x="1352" y="34.500">2M</text><text x="1376" y="34.500">3M</text><text x="1400" y="34.500">5M</text><text x="1427.500" y="34.500">10M</text><text x="1458" y="34.500">15M</text><text x="1488" y="34.500">30M</text><text x="1513.500" y="34.500">1H</text>
</g>

<!-- red annotation -->
<ellipse cx="1458" cy="60.500" rx="450" ry="32.500" fill="none" stroke="#ed1c24" stroke-width="5"/>

<!-- dialog -->
<g class="dg">
<rect x="575" y="171" width="767" height="618" fill="#f0f0f0"/>
<rect x="575" y="171" width="767" height="30" fill="#fff"/>
<text x="583" y="186" textLength="272" lengthAdjust="spacingAndGlyphs">Study Settings: Market Depth Historical Graph. ID:11</text>
<path d="M1321 181l10 10M1331 181l-10 10" stroke="#111" stroke-width="1.2"/>

<path d="M590 238H1328" stroke="#fff" stroke-width="1.500"/><path d="M590 216V730" stroke="#fff" stroke-width="1.500"/>
<path d="M1328 238V730M589 730.500H1329" stroke="#696969" stroke-width="1.500"/>
<path d="M590 238V216H715.500V238" fill="#f0f0f0" stroke="#fff"/><path d="M716 216V238" stroke="#696969" stroke-width="1.500"/>
<path d="M718 238V218H792V238" fill="#f0f0f0" stroke="#fff"/><path d="M792.500 218V238" stroke="#696969" stroke-width="1.500"/>
<path d="M795 238V218H839V238" fill="#f0f0f0" stroke="#fff"/><path d="M840 218V238" stroke="#696969" stroke-width="1.500"/>
<text x="597" y="226" textLength="111" lengthAdjust="spacingAndGlyphs">Settings and Inputs</text>
<text x="721" y="228" textLength="66" lengthAdjust="spacingAndGlyphs">Subgraphs</text>
<text x="799" y="228" textLength="34" lengthAdjust="spacingAndGlyphs">Alerts</text>

<text x="605" y="284" textLength="131" lengthAdjust="spacingAndGlyphs">Standard Precedence</text>
<text x="605" y="310" textLength="63" lengthAdjust="spacingAndGlyphs">Based On:</text>
<rect x="605.500" y="323.500" width="206" height="21" fill="#fff" stroke="#fff"/><path d="M605.500 345V323.500H812" fill="none" stroke="#696969" stroke-width="1.500"/>
<text x="609" y="334" textLength="116" lengthAdjust="spacingAndGlyphs">&lt;Main Price Graph&gt;</text>
<rect x="794" y="325" width="16.500" height="18" class="face"/><path d="M794 343.500H811V325" class="sh" style="stroke-width:1.500"/><path d="M799 332h7l-3.500 4z" fill="#000"/>
<text x="605" y="362" textLength="74" lengthAdjust="spacingAndGlyphs">Short Name:</text>
<rect x="605.500" y="374.500" width="206" height="22" fill="#fff" stroke="#fff"/><path d="M605.500 397V374.500H812" fill="none" stroke="#696969" stroke-width="1.500"/>
<text x="605" y="414" textLength="81" lengthAdjust="spacingAndGlyphs">Chart Region:</text>
<rect x="605.500" y="427.500" width="96" height="21" fill="#fff" stroke="#fff"/><path d="M605.500 449V427.500H702" fill="none" stroke="#696969" stroke-width="1.500"/>
<text x="610" y="438">1</text>
<rect x="684" y="429" width="16.500" height="18" class="face"/><path d="M684 447.500H701V429" class="sh" style="stroke-width:1.500"/><path d="M689 436h7l-3.500 4z" fill="#000"/>
<rect x="715.500" y="422.500" width="97" height="26" class="face"/><path d="M715 449H813V422" class="sh"/>
<text class="c" x="763" y="435" style="font-size:13.500px;text-anchor:middle">Scale</text>
<text x="605" y="466" textLength="82" lengthAdjust="spacingAndGlyphs">Value Format:</text>
<rect x="605.500" y="478.500" width="168" height="22" fill="#fff" stroke="#fff"/><path d="M605.500 501V478.500H774" fill="none" stroke="#696969" stroke-width="1.500"/>
<text x="609" y="490" textLength="51" lengthAdjust="spacingAndGlyphs">Inherited</text>
<rect x="756" y="480" width="16.500" height="18.500" class="face"/><path d="M756 499H773V480" class="sh" style="stroke-width:1.500"/><path d="M761 487h7l-3.500 4z" fill="#000"/>

<rect class="cb" x="605.500" y="516.500" width="11" height="11"/><text x="623" y="521" textLength="170" lengthAdjust="spacingAndGlyphs">Display As Main Price Graph</text>
<rect class="cb" x="605.500" y="540.500" width="11" height="11"/><text x="623" y="545" textLength="65" lengthAdjust="spacingAndGlyphs">Hide Study</text>
<rect class="cb" x="605.500" y="570.500" width="11" height="11"/><path class="ck" d="M608 576l2.500 3l4-6"/><text x="623" y="567" textLength="141" lengthAdjust="spacingAndGlyphs">Draw Study Underneath</text><text x="623" y="583" textLength="103" lengthAdjust="spacingAndGlyphs">Main Price Graph</text>
<rect class="cb" x="605.500" y="600.500" width="11" height="11"/><text x="623" y="606" textLength="130" lengthAdjust="spacingAndGlyphs">Protect with Password</text>
<rect class="cb" x="605.500" y="673.500" width="11" height="11"/><path class="ck" d="M608 679l2.500 3l4-6"/><text x="623" y="679" textLength="153" lengthAdjust="spacingAndGlyphs">Include in Study Summary</text>
<rect class="cb" x="605.500" y="697.500" width="11" height="11"/><path class="ck" d="M608 703l2.500 3l4-6"/><text x="623" y="703" textLength="137" lengthAdjust="spacingAndGlyphs">Include in Spreadsheet</text>

<!-- list -->
<rect x="826" y="255" width="487" height="397" fill="#fff"/>
<rect x="827" y="256" width="470" height="19" fill="#f0f0f0"/>
<path d="M827 275.500H1296M1148.500 256V275" stroke="#a0a0a0"/>
<path d="M826 652V255H1313" fill="none" stroke="#696969" stroke-width="2"/>
<path d="M1313.500 255V652.500H826" fill="none" stroke="#fff"/>
<text x="833" y="266" textLength="68" lengthAdjust="spacingAndGlyphs">Input Name</text>
<text x="1156" y="266" textLength="66" lengthAdjust="spacingAndGlyphs">Input Value</text>
<path stroke="#eee" d="M827 295.500h469m-469 17h469m-469 17h469m-469 17h469m-469 17h469m-469 17h469m-469 17h469m-469 17h469m-469 17h469m-469 17h469m-469 17h469m-469 17h469m-469 17h469m-469 17h469m-469 17h469m-469 17h469m-469 17h469m-469 17h469m-469 17h469m-469 17h469"/>
<rect x="1151" y="278" width="145" height="16" fill="#f0f"/><rect x="1151" y="295" width="145" height="16" fill="#bfbf00"/><rect x="1151" y="312" width="145" height="16" fill="#bfbf00"/><rect x="1151" y="329" width="145" height="16" fill="#808000"/><rect x="1151" y="346" width="145" height="16" fill="#808000"/><rect x="1151" y="363" width="145" height="16" fill="#404000"/><rect x="1151" y="380" width="145" height="16" fill="#f00"/><rect x="1151" y="397" width="145" height="16" fill="#000"/><rect x="1151" y="414" width="145" height="16" fill="#000"/><rect x="1151" y="431" width="145" height="16" fill="#0ff"/><rect x="1151" y="448" width="145" height="16" fill="#203040"/><rect x="1151" y="465" width="145" height="16" fill="#405580"/><rect x="1151" y="482" width="145" height="16" fill="#405580"/><rect x="1151" y="499" width="145" height="16" fill="#608fbf"/><rect x="1151" y="516" width="145" height="16" fill="#608fbf"/><rect x="1151" y="533" width="145" height="16" fill="#80ff80"/>
<g transform="translate(0 -.5)">
<text x="831" y="286.300" textLength="184" lengthAdjust="spacingAndGlyphs">Range 3 Max Ask Color&nbsp;&nbsp; (In:22)</text>
<text x="831" y="303.300" textLength="180" lengthAdjust="spacingAndGlyphs">Range 3 Min Ask Color&nbsp;&nbsp; (In:31)</text>
<text x="831" y="320.300" textLength="184" lengthAdjust="spacingAndGlyphs">Range 2 Max Ask Color&nbsp;&nbsp; (In:21)</text>
<text x="831" y="337.300" textLength="180" lengthAdjust="spacingAndGlyphs">Range 2 Min Ask Color&nbsp;&nbsp; (In:30)</text>
<text x="831" y="354.300" textLength="184" lengthAdjust="spacingAndGlyphs">Range 1 Max Ask Color&nbsp;&nbsp; (In:20)</text>
<text x="831" y="371.300" textLength="180" lengthAdjust="spacingAndGlyphs">Range 1 Min Ask Color&nbsp;&nbsp; (In:29)</text>
<text x="831" y="388.300" textLength="176" lengthAdjust="spacingAndGlyphs">Range 0 Max Ask Color&nbsp;&nbsp; (In:3)</text>
<text x="831" y="405.300" textLength="180" lengthAdjust="spacingAndGlyphs">Range 0 Min Ask Color&nbsp;&nbsp; (In:28)</text>
<text x="831" y="422.300" textLength="176" lengthAdjust="spacingAndGlyphs">Range 0 Min Bid Color&nbsp;&nbsp; (In:24)</text>
<text x="831" y="439.300" textLength="173" lengthAdjust="spacingAndGlyphs">Range 0 Max Bid Color&nbsp;&nbsp; (In:2)</text>
<text x="831" y="456.300" textLength="176" lengthAdjust="spacingAndGlyphs">Range 1 Min Bid Color&nbsp;&nbsp; (In:25)</text>
<text x="831" y="473.300" textLength="180" lengthAdjust="spacingAndGlyphs">Range 1 Max Bid Color&nbsp;&nbsp; (In:17)</text>
<text x="831" y="490.300" textLength="176" lengthAdjust="spacingAndGlyphs">Range 2 Min Bid Color&nbsp;&nbsp; (In:26)</text>
<text x="831" y="507.300" textLength="180" lengthAdjust="spacingAndGlyphs">Range 2 Max Bid Color&nbsp;&nbsp; (In:18)</text>
<text x="831" y="524.300" textLength="176" lengthAdjust="spacingAndGlyphs">Range 3 Min Bid Color&nbsp;&nbsp; (In:27)</text>
<text x="831" y="541.300" textLength="180" lengthAdjust="spacingAndGlyphs">Range 3 Max Bid Color&nbsp;&nbsp; (In:19)</text>
<text x="831" y="558.300" textLength="211" lengthAdjust="spacingAndGlyphs">Use Range Minimum Colors&nbsp;&nbsp; (In:32)</text>
<text x="831" y="575.300" textLength="314" lengthAdjust="spacingAndGlyphs">Use Percent or Actual Values for Threshold Levels&nbsp;&nbsp; ...</text>
<text x="831" y="592.300" textLength="195" lengthAdjust="spacingAndGlyphs">Percent Color Thresholds&nbsp;&nbsp; (In:23)</text>
<text x="831" y="609.300" textLength="186" lengthAdjust="spacingAndGlyphs">Actual Color Thresholds&nbsp;&nbsp; (In:34)</text>
<text x="831" y="626.300" textLength="238" lengthAdjust="spacingAndGlyphs">Minimum Volume Intensity Percent&nbsp;&nbsp; (In:5)</text>
<text x="1156" y="286.300" textLength="107" lengthAdjust="spacingAndGlyphs">R: 255, G: 0, B: 255</text>
<text x="1156" y="303.300" textLength="108" lengthAdjust="spacingAndGlyphs">R: 191, G: 191, B: 0</text>
<text x="1156" y="320.300" textLength="108" lengthAdjust="spacingAndGlyphs">R: 191, G: 191, B: 0</text>
<text x="1156" y="337.300" textLength="108" lengthAdjust="spacingAndGlyphs">R: 128, G: 128, B: 0</text>
<text x="1156" y="354.300" textLength="108" lengthAdjust="spacingAndGlyphs">R: 128, G: 128, B: 0</text>
<text x="1156" y="371.300" textLength="94" lengthAdjust="spacingAndGlyphs">R: 64, G: 64, B: 0</text>
<text x="1156" y="388.300" textLength="94" lengthAdjust="spacingAndGlyphs">R: 255, G: 0, B: 0</text>
<text x="1156" y="405.300" textLength="80" lengthAdjust="spacingAndGlyphs" style="fill:#fff">R: 0, G: 0, B: 0</text>
<text x="1156" y="422.300" textLength="80" lengthAdjust="spacingAndGlyphs" style="fill:#fff">R: 0, G: 0, B: 0</text>
<text x="1156" y="439.300" textLength="108" lengthAdjust="spacingAndGlyphs">R: 0, G: 255, B: 255</text>
<text x="1156" y="456.300" textLength="100" lengthAdjust="spacingAndGlyphs">R: 32, G: 48, B: 64</text>
<text x="1156" y="473.300" textLength="108" lengthAdjust="spacingAndGlyphs">R: 64, G: 85, B: 128</text>
<text x="1156" y="490.300" textLength="108" lengthAdjust="spacingAndGlyphs">R: 64, G: 85, B: 128</text>
<text x="1156" y="507.300" textLength="114" lengthAdjust="spacingAndGlyphs">R: 96, G: 143, B: 191</text>
<text x="1156" y="524.300" textLength="114" lengthAdjust="spacingAndGlyphs">R: 96, G: 143, B: 191</text>
<text x="1156" y="541.300" textLength="121" lengthAdjust="spacingAndGlyphs">R: 128, G: 255, B: 128</text>
<text x="1156" y="558.300" textLength="18" lengthAdjust="spacingAndGlyphs">No</text>
<text x="1156" y="575.300" textLength="75" lengthAdjust="spacingAndGlyphs">Actual Value</text>
<text x="1156" y="592.300" textLength="64" lengthAdjust="spacingAndGlyphs">.40, .60, .80</text>
<text x="1156" y="609.300" textLength="76" lengthAdjust="spacingAndGlyphs">100, 200, 300</text>
<text x="1156" y="626.300" textLength="13" lengthAdjust="spacingAndGlyphs">10</text>
</g>
<rect x="1297" y="256" width="15" height="380" fill="#f0f0f0"/>
<rect x="1297" y="273" width="15" height="173" fill="#c8c8c8"/>
<path class="cv" d="M1301 267l3.500-3.500l3.500 3.500M1301 625l3.500 3.500l3.500-3.500"/>
<rect x="827" y="636" width="485" height="15" fill="#f0f0f0"/>
<rect x="844" y="636" width="437" height="15" fill="#c8c8c8"/>
<path class="cv" d="M837 640l-3.500 3.500l3.500 3.500M1287 640l3.500 3.500l-3.500 3.500"/>

<!-- input group -->
<path d="M832 668.500H825.500V714.500H1313.500V668.500H864" fill="none" stroke="#a8a8a8"/>
<text x="834" y="668" textLength="29" lengthAdjust="spacingAndGlyphs">Input</text>
<text x="835" y="688" textLength="182" lengthAdjust="spacingAndGlyphs">Select an input in the list above</text>

<!-- buttons -->
<rect x="589.500" y="741.500" width="91" height="26" fill="#f0f0f0" stroke="#555" stroke-width="1.500"/><path d="M589 768H681V741" class="sh"/>
<rect x="691.500" y="741.500" width="91" height="26" class="face"/><path d="M691 768H783V741" class="sh"/>
<rect x="793.500" y="741.500" width="91" height="26" class="face"/><path d="M793 768H885V741" class="sh"/>
<rect x="895.500" y="741.500" width="91" height="26" class="face"/><path d="M895 768H987V741" class="sh"/>
<rect x="997.500" y="741.500" width="99" height="26" class="face"/><path d="M997 768H1097V741" class="sh"/>
<rect x="1107.500" y="741.500" width="106" height="26" class="face"/><path d="M1107 768H1214V741" class="sh"/>
<rect x="1225.500" y="741.500" width="107" height="26" class="face"/><path d="M1225 768H1333V741" class="sh"/>
<g style="font-size:13.500px"><text x="635" y="754" style="text-anchor:middle;font-size:13.500px">OK</text><text x="737" y="754" style="text-anchor:middle;font-size:13.500px">Cancel</text><text x="839" y="754" style="text-anchor:middle;font-size:13.500px">Apply</text><text x="941" y="754" style="text-anchor:middle;font-size:13.500px">Help</text><text x="1047" y="754" style="text-anchor:middle;font-size:13.500px">Description</text><text x="1160.500" y="754" style="text-anchor:middle;font-size:13.500px">Set Defaults</text><text x="1279" y="754" style="text-anchor:middle;font-size:13.500px">Reset Defaults</text></g>
</g>
</svg>
</body></html>
